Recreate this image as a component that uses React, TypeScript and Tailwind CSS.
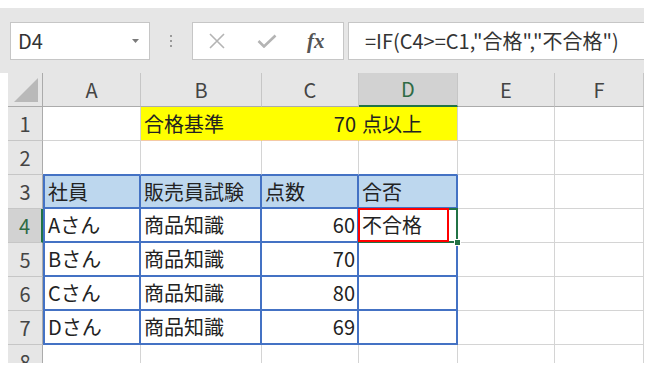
import React from "react";

const jp = { fontFamily: '"Noto Sans CJK JP", "Noto Sans", sans-serif' };

type CellDef = { text?: string; cls: string; right?: boolean };

const body = "border-r border-b border-[#d4d4d4] bg-white";
const yellow = "border-b border-b-[#f4c9a6] border-r border-r-[#ffff00] bg-[#ffff00]";
const th = "border-r-2 border-b-2 border-t border-[#4472c4] bg-[#bdd7ee]";
const td = "border-r-2 border-b-2 border-[#4472c4] bg-white";

const rows: { n: string; active?: boolean; cells: CellDef[] }[] = [
  {
    n: "1",
    cells: [
      { cls: body },
      { text: "合格基準", cls: yellow },
      { text: "70", cls: yellow, right: true },
      { text: "点以上", cls: "border-b border-b-[#f4c9a6] border-r border-r-[#d4d4d4] bg-[#ffff00]" },
      { cls: body },
      { cls: body },
    ],
  },
  {
    n: "2",
    cells: [
      { cls: "border-r border-r-[#d4d4d4] border-b border-b-[#4472c4] bg-white" },
      { cls: "border-r border-r-[#d4d4d4] border-b border-b-[#4472c4] bg-white" },
      { cls: "border-r border-r-[#d4d4d4] border-b border-b-[#4472c4] bg-white" },
      { cls: "border-r border-r-[#d4d4d4] border-b border-b-[#4472c4] bg-white" },
      { cls: body },
      { cls: body },
    ],
  },
  {
    n: "3",
    cells: [
      { text: "社員", cls: th + " border-l-2" },
      { text: "販売員試験", cls: th },
      { text: "点数", cls: th },
      { text: "合否", cls: th },
      { cls: body },
      { cls: body },
    ],
  },
  {
    n: "4",
    active: true,
    cells: [
      { text: "Aさん", cls: td + " border-l-2" },
      { text: "商品知識", cls: td },
      { text: "60", cls: td, right: true },
      { text: "不合格", cls: td },
      { cls: body },
      { cls: body },
    ],
  },
  {
    n: "5",
    cells: [
      { text: "Bさん", cls: td + " border-l-2" },
      { text: "商品知識", cls: td },
      { text: "70", cls: td, right: true },
      { cls: td },
      { cls: body },
      { cls: body },
    ],
  },
  {
    n: "6",
    cells: [
      { text: "Cさん", cls: td + " border-l-2" },
      { text: "商品知識", cls: td },
      { text: "80", cls: td, right: true },
      { cls: td },
      { cls: body },
      { cls: body },
    ],
  },
  {
    n: "7",
    cells: [
      { text: "Dさん", cls: td + " border-l-2" },
      { text: "商品知識", cls: td },
      { text: "69", cls: td, right: true },
      { cls: td },
      { cls: body },
      { cls: body },
    ],
  },
  {
    n: "8",
    cells: [
      { cls: body },
      { cls: body },
      { cls: body },
      { cls: body },
      { cls: body },
      { cls: body },
    ],
  },
];

const cols = ["A", "B", "C", "D", "E", "F"];

export default function App() {
  return (
    <div className="w-[654px] h-[371px] bg-white pt-2 overflow-hidden" style={jp}>
      {/* Formula bar */}
      <div className="w-[644px] h-[65px] bg-[#e6e6e6] flex items-start pt-[14px] pl-[10px]">
        <div className="w-[140px] h-[38px] bg-white border border-[#c6c6c6] flex items-center justify-between pl-[7px] pr-[10px]">
          <span className="text-[20px] text-[#333]">D4</span>
          <svg width="7" height="4" viewBox="0 0 7 4">
            <polygon points="0,0 7,0 3.5,4" fill="#7a7a7a" />
          </svg>
        </div>
        <div className="w-[42px] h-[38px] flex items-center justify-center">
          <div className="flex flex-col gap-[3px]">
            <span className="w-[2px] h-[2px] bg-[#9a9a9a]" />
            <span className="w-[2px] h-[2px] bg-[#9a9a9a]" />
            <span className="w-[2px] h-[2px] bg-[#9a9a9a]" />
          </div>
        </div>
        <div className="w-[152px] h-[38px] bg-white border border-[#c6c6c6] flex items-center pl-[16px]">
          <svg width="16" height="16" viewBox="0 0 16 16">
            <path d="M1 1 L15 15 M15 1 L1 15" stroke="#b4b4b4" strokeWidth="1.6" fill="none" />
          </svg>
          <svg className="ml-[32px]" width="20" height="14" viewBox="0 0 20 14">
            <path d="M1.5 7 L7 12.5 L18.5 1.5" stroke="#b4b4b4" strokeWidth="2.6" fill="none" />
          </svg>
          <span
            className="ml-[30px] text-[21px] italic font-bold text-[#555] leading-none"
            style={{ fontFamily: '"Liberation Serif", serif' }}
          >
            fx
          </span>
        </div>
        <div className="ml-[4px] flex-1 h-[38px] bg-white border border-r-0 border-[#c6c6c6] flex items-center pl-[16px]">
          <span className="text-[20px] text-[#333] whitespace-nowrap">=IF(C4&gt;=C1,"合格","不合格")</span>
        </div>
      </div>

      {/* Sheet grid */}
      <div className="ml-2 w-[636px] h-[290px] overflow-hidden grid grid-cols-[35px_98px_121px_97px_99px_97px_89px] auto-rows-[34px] text-[20px] text-[#222]">
        <div className="bg-[#e6e6e6] border-r border-b border-[#ababab] flex items-end justify-end p-[4px]">
          <svg width="24" height="24" viewBox="0 0 24 24">
            <polygon points="24,0 24,24 0,24" fill="#b9b9b9" />
          </svg>
        </div>
        {cols.map((c) =>
          c === "D" ? (
            <div
              key={c}
              className="bg-[#d2d2d2] border-r border-r-[#c6c6c6] border-b-2 border-b-[#217346] flex items-center justify-center text-[#2f6b45]"
            >
              {c}
            </div>
          ) : (
            <div
              key={c}
              className="bg-[#e6e6e6] border-r border-r-[#c6c6c6] border-b border-b-[#ababab] flex items-center justify-center text-[#444]"
            >
              {c}
            </div>
          )
        )}
        {rows.map((r) => (
          <React.Fragment key={r.n}>
            {r.active ? (
              <div className="bg-[#d2d2d2] border-r-2 border-r-[#217346] border-b border-b-[#c6c6c6] flex items-center justify-center text-[#2f6b45]">
                {r.n}
              </div>
            ) : (
              <div className="bg-[#e6e6e6] border-r border-r-[#ababab] border-b border-b-[#c6c6c6] flex items-center justify-center text-[#444]">
                {r.n}
              </div>
            )}
            {r.cells.map((c, i) => (
              <div
                key={i}
                className={`${c.cls} relative flex items-center whitespace-nowrap ${
                  c.right ? "justify-end pr-[2px]" : "pl-[3px]"
                }`}
              >
                {c.text}
                {r.n === "4" && i === 3 && (
                  <>
                    <div className="absolute z-10 -left-[1px] -top-[1px] -right-[2px] -bottom-[2px] border-2 border-[#217346]" />
                    <div className="absolute z-10 -left-[1px] -top-[1px] w-[91px] h-[34px] border-2 border-[#ff0000]" />
                    <div className="absolute z-20 -right-[5px] -bottom-[5px] w-[7px] h-[7px] bg-[#217346] border border-white" />
                  </>
                )}
              </div>
            ))}
          </React.Fragment>
        ))}
      </div>
    </div>
  );
}
